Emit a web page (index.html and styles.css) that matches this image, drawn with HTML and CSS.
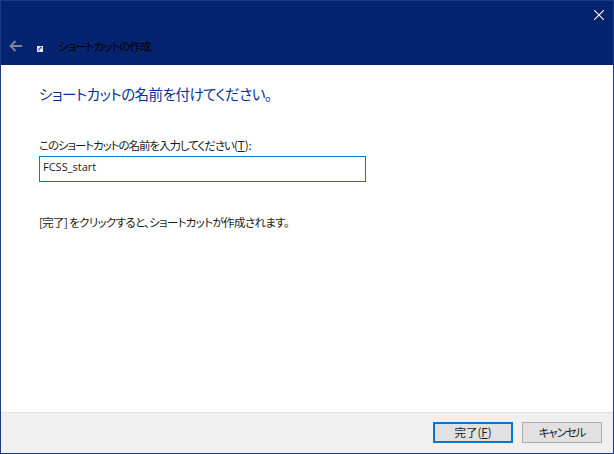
FILE: index.html
```html
<!DOCTYPE html>
<html lang="ja">
<head>
<meta charset="utf-8">
<title>ショートカットの作成</title>
<link rel="stylesheet" href="styles.css">
</head>
<body>
<div class="window">
  <header class="titlebar">
    <div class="close-row">
      <svg class="close" width="10" height="10" viewBox="0 0 10 10"><path d="M0 0L10 10M10 0L0 10" stroke="#fff" stroke-width="1.1" fill="none"/></svg>
    </div>
    <div class="nav-row">
      <svg class="back" width="13" height="12" viewBox="0 0 13 12"><path d="M13 6H1.5M6.5 1L1.5 6L6.5 11" stroke="#83878f" stroke-width="1.8" fill="none"/></svg>
      <svg class="app-icon" width="6" height="6" viewBox="0 0 6 6"><rect width="6" height="6" fill="#e8eaf0"/><path d="M2 5V2.5L4 1.5M3 1L4.5 1.5L3.8 3" stroke="#1c4a9c" stroke-width="1" fill="none"/></svg>
      <span class="nav-title">ショートカットの作成</span>
    </div>
  </header>
  <main class="content">
    <h1 class="heading">ショートカットの名前を付けてください。</h1>
    <label class="field-label">このショートカットの名前を入力してください<span class="accel">(<u>T</u>):</span></label>
    <div class="field">FCSS_start</div>
    <p class="hint">[完了] をクリックすると、ショートカットが作成されます。</p>
  </main>
  <footer class="footer">
    <button class="btn btn-primary">完了(<u>F</u>)</button>
    <button class="btn btn-cancel">キャンセル</button>
  </footer>
</div>
</body>
</html>
```
FILE: styles.css
```css
* { box-sizing: border-box; }
html, body { margin: 0; padding: 0; }
body { width: 614px; height: 454px; overflow: hidden; background: #fff; font-family: "Noto Sans CJK JP", "Noto Sans", sans-serif; font-feature-settings: "palt"; }
.window { width: 614px; height: 454px; display: flex; flex-direction: column; border: 1px solid #1c3a86; }
.titlebar { height: 64px; background: #06236f; flex: none; display: flex; flex-direction: column; }
.close-row { height: 30px; display: flex; justify-content: flex-end; padding: 9px 9px 0 0; }
.close { display: block; }
.nav-row { display: flex; align-items: center; height: 30px; position: relative; }
.back { margin: 0 0 0 8px; }
.app-icon { margin: 6px 0 0 15px; }
.nav-title { margin-left: 15px; font-size: 11.5px; line-height: 16px; color: #000; letter-spacing: -0.95px; }
.content { flex: 1; padding: 0 0 0 38px; display: flex; flex-direction: column; }
.heading { margin: 19px 0 0; font-size: 14.5px; line-height: 20px; font-weight: 400; color: #003399; letter-spacing: -0.5px; }
.field-label { margin-top: 33px; font-size: 11.5px; line-height: 16px; color: #1a1a1a; letter-spacing: -1.05px; }
.accel { letter-spacing: 0; }
.field { margin-top: 3px; width: 327px; height: 26px; border: 1px solid #0078d7; padding: 0 3px; font-family: "Open Sans", sans-serif; font-size: 11px; line-height: 20px; color: #1a1a1a; }
.hint { margin: 32px 0 0; font-size: 11.5px; line-height: 16px; color: #1a1a1a; letter-spacing: -0.65px; }
.footer { height: 41px; flex: none; background: #f0f0f0; border-top: 1px solid #dfdfdf; display: flex; justify-content: flex-end; gap: 9px; padding: 9px 11px 0 0; }
.btn { width: 80px; height: 21px; padding: 0; background: #e1e1e1; border: 1px solid #adadad; font-family: "Noto Sans CJK JP", sans-serif; font-feature-settings: "palt"; font-size: 11.5px; line-height: 17px; color: #1a1a1a; }
.btn-primary { border: 2px solid #0078d7; line-height: 15px; }
.btn-cancel { letter-spacing: -1.1px; }
```
